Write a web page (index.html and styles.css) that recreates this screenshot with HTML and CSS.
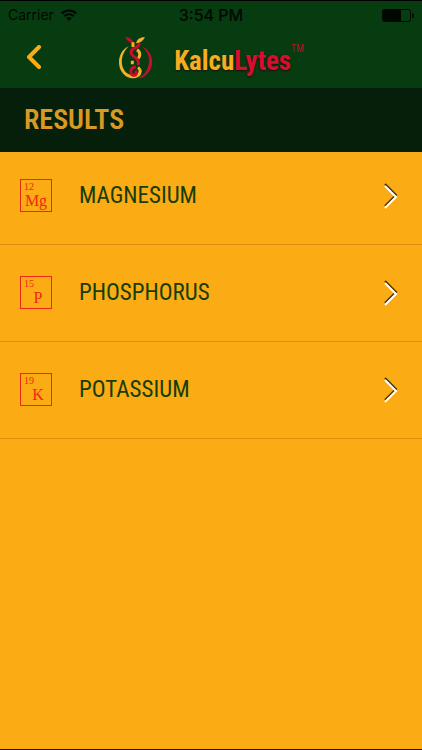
FILE: index.html
```html
<!DOCTYPE html>
<html lang="en">
<head>
<meta charset="utf-8">
<meta name="viewport" content="width=device-width, initial-scale=1">
<title>KalcuLytes</title>
<link rel="stylesheet" href="styles.css">
</head>
<body>
<div class="app">
  <div class="status">
    <div class="carrier">
      <span>Carrier</span>
      <svg width="16" height="12" viewBox="0 0 16 12" fill="none" stroke="currentColor" stroke-width="2" aria-hidden="true">
        <path d="M.8 4.5a10.2 10.2 0 0 1 14.4 0M3.3 7.1a6.6 6.6 0 0 1 9.4 0"/>
        <path d="M8 12 5.4 9.3a3.8 3.8 0 0 1 5.2 0z" fill="currentColor" stroke="none"/>
      </svg>
    </div>
    <time class="clock">3:54 PM</time>
    <svg class="battery" width="32" height="13" viewBox="0 0 32 13" aria-hidden="true">
      <rect x=".5" y=".5" width="28" height="12" rx="2" fill="none" stroke="currentColor"/>
      <path d="M1 1h18v11H1zM30 4q2 0 2 2.500t-2 2.500z" fill="currentColor"/>
    </svg>
  </div>
  <header class="bar">
    <button class="back" type="button" aria-label="Back">
      <svg width="16" height="24" viewBox="0 0 16 24" fill="none" stroke="currentColor" stroke-width="4" stroke-linecap="round" stroke-linejoin="round"><path d="M13 2 3 12l10 10"/></svg>
    </button>
    <div class="brand">
      <svg class="logo" width="36" height="44" viewBox="24 12 108 132" aria-hidden="true">
        <path class="gold-fill" d="M56 46C17 63 17 126 58 140c19 5 35-2 36-18v-8c-6 15-19 22-34 17C29 119 27 74 56 46z"/>
        <path class="red-fill" d="M96 46c37 17 42 68 6 91-5 4-11 5-17 4 11-5 18-11 23-20 16-27 11-55-12-75z"/>
        <path class="red-fill" d="M45 18c14 1 23 7 26 19-11-1-20-8-26-19z"/>
        <path class="gold-fill" d="M105 19c-15-1-24 6-27 18 13-1 22-8 27-18z"/>
        <g fill="none" stroke-width="9">
          <path class="gold" d="M69 34v14M81 56c12 8 11 23-2 29M67 89v11M84 109c8 6 8 15 2 23"/>
          <path class="red" d="M87 36c3 17-24 12-24 28 0 15 23 13 22 29v9M77 108c-18 2-19 23-6 25 9 1 10-8 5-13"/>
        </g>
      </svg>
      <span class="name"><span class="gold-text">Kalcu</span><span class="red-text">Lytes</span></span><span class="tm">TM</span>
    </div>
  </header>
  <h1 class="title">RESULTS</h1>
  <main>
    <ul class="list">
      <li><a class="row" href="#magnesium">
        <span class="element"><span class="number">12</span><span class="symbol">Mg</span></span>
        <span class="label">MAGNESIUM</span>
        <svg class="chevron" width="16" height="26" viewBox="0 0 16 26" fill="none" aria-hidden="true"><path class="edge" d="m2 1 11 11L2 23"/><path class="face" d="m2 3 11 11L2 25"/></svg>
      </a></li>
      <li><a class="row" href="#phosphorus">
        <span class="element"><span class="number">15</span><span class="symbol">P</span></span>
        <span class="label">PHOSPHORUS</span>
        <svg class="chevron" width="16" height="26" viewBox="0 0 16 26" fill="none" aria-hidden="true"><path class="edge" d="m2 1 11 11L2 23"/><path class="face" d="m2 3 11 11L2 25"/></svg>
      </a></li>
      <li><a class="row" href="#potassium">
        <span class="element"><span class="number">19</span><span class="symbol">K</span></span>
        <span class="label">POTASSIUM</span>
        <svg class="chevron" width="16" height="26" viewBox="0 0 16 26" fill="none" aria-hidden="true"><path class="edge" d="m2 1 11 11L2 23"/><path class="face" d="m2 3 11 11L2 25"/></svg>
      </a></li>
    </ul>
  </main>
</div>
</body>
</html>
```
FILE: styles.css
```css
* { box-sizing: border-box; }
body {
  margin: 0;
  background: #fbab13;
  font-family: "Roboto Condensed", "Arial Narrow", "Liberation Sans", sans-serif;
}
.app {
  min-height: 100vh;
  border-top: 1px solid #000;
  border-bottom: 1px solid #281205;
}
.status {
  display: grid;
  grid-template-columns: 1fr auto 1fr;
  align-items: center;
  height: 28px;
  padding: 0 8px;
  background: #073b10;
  color: #010802;
  font: 14px/28px Inter, sans-serif;
}
.carrier { display: flex; align-items: center; gap: 7px; }
.clock { font-size: 16px; font-weight: 500; }
.battery { justify-self: end; }
.bar {
  display: grid;
  grid-template-columns: 68px 1fr 68px;
  align-items: center;
  height: 59px;
  padding-bottom: 4px;
  background: #073b10;
}
.back {
  display: flex;
  justify-content: center;
  padding: 12px 0;
  border: 0;
  background: none;
  color: #fbab13;
}
.brand { display: flex; align-items: center; justify-content: center; }
.logo { margin-right: 20px; }
.gold { stroke: #f3b229; }
.red { stroke: #c90e2c; }
.gold-fill { fill: #f3b229; }
.red-fill { fill: #c90e2c; }
.name { padding-top: 8px; font-size: 27px; font-weight: 700; line-height: 32px; text-shadow: 0 1px 2px #1c1005; }
.gold-text { color: #f6ad20; }
.red-text { color: #db0c31; }
.tm { align-self: flex-start; padding-top: 6px; color: #b51327; font-size: 10px; line-height: 16px; }
.title {
  margin: 0;
  padding: 0 24px;
  background: #051f0b;
  color: #d89a22;
  font-size: 28px;
  font-weight: 600;
  line-height: 64px;
}
.list { margin: 0; padding: 0; list-style: none; }
.row {
  display: flex;
  align-items: center;
  padding: 31px 23px 32px 20px;
  border-bottom: 1px solid #dc900f;
  color: #153d08;
  text-decoration: none;
}
li:first-child .row { padding-top: 27px; }
.element {
  display: flex;
  flex-direction: column;
  width: 32px;
  height: 33px;
  margin-right: 27px;
  padding: 1px 3px;
  border: 1px solid #ee2913;
  color: #ee2913;
  font-family: "Liberation Serif", serif;
}
.number { font-size: 10px; line-height: 11px; }
.symbol { font-size: 16px; line-height: 18px; text-align: center; }
li:not(:first-child) .symbol { padding-left: 4px; }
.label { flex: 1; font-size: 23px; line-height: 33px; }
.edge { stroke: #4a3206; stroke-width: 2; }
.face { stroke: #fff; stroke-width: 2; }
```
